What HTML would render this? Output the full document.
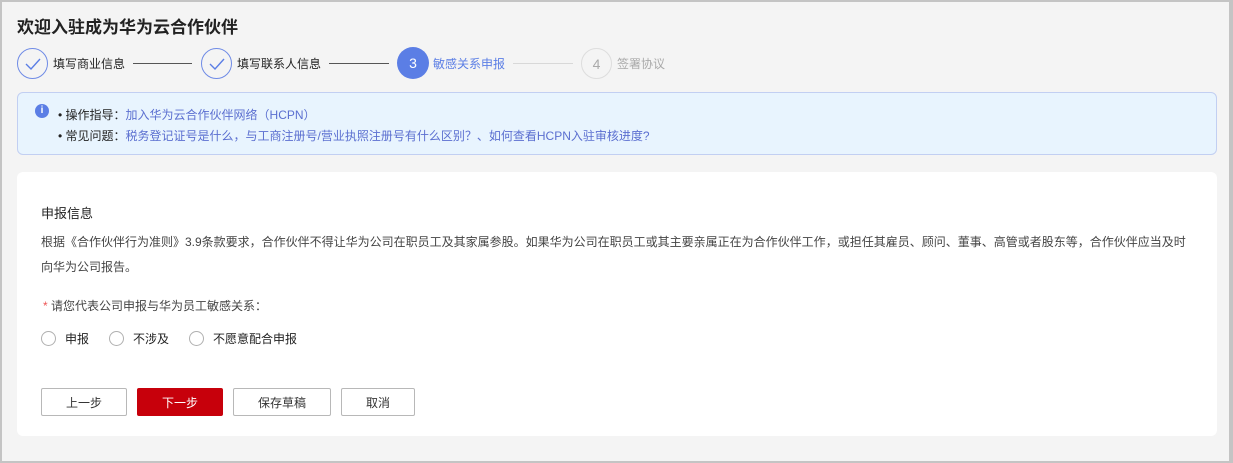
<!DOCTYPE html>
<html><head><meta charset="utf-8"><style>
*{margin:0;padding:0;box-sizing:border-box}
body{width:1233px;height:463px;overflow:hidden;font-family:"Liberation Sans","Noto Sans CJK SC",sans-serif;background:#c4c4c4;position:relative}
.page{position:absolute;left:2px;top:2px;width:1227px;height:459px;background:#f4f4f4}
.a{position:absolute;white-space:nowrap}
.c{position:absolute;width:31px;height:31px;border-radius:50%;display:flex;align-items:center;justify-content:center;font-size:14px}
.ln{position:absolute;height:1px;top:63px}
.btn{position:absolute;top:388px;height:28px;border:1px solid #b8b8b8;border-radius:2px;background:#fff;font-size:12px;color:#333;display:flex;align-items:center;justify-content:center}
.r{position:absolute;top:331px;width:15px;height:15px;border:1px solid #b0b0b0;border-radius:50%;background:#fff}
.st{position:absolute;white-space:nowrap;top:55px;font-size:12px}
</style></head><body>
<div class="page"></div>
<div class="a" style="left:17px;top:13px;font-size:17px;font-weight:bold;color:#222">欢迎入驻成为华为云合作伙伴</div>

<div class="c" style="left:17px;top:48px;border:1px solid #6f8be6"><svg width="16" height="12" viewBox="0 0 16 12"><path d="M1 6 L6 11 L15 1" fill="none" stroke="#5b7ee5" stroke-width="1.4"/></svg></div>
<div class="st" style="left:53px;color:#222">填写商业信息</div>
<div class="ln" style="left:133px;width:59px;background:#555"></div>
<div class="c" style="left:201px;top:48px;border:1px solid #6f8be6"><svg width="16" height="12" viewBox="0 0 16 12"><path d="M1 6 L6 11 L15 1" fill="none" stroke="#5b7ee5" stroke-width="1.4"/></svg></div>
<div class="st" style="left:237px;color:#222">填写联系人信息</div>
<div class="ln" style="left:329px;width:60px;background:#555"></div>
<div class="c" style="left:397px;top:47px;width:32px;height:32px;background:#5b7ee5;color:#fff">3</div>
<div class="st" style="left:433px;color:#5b7ee5">敏感关系申报</div>
<div class="ln" style="left:513px;width:60px;background:#d8d8d8"></div>
<div class="c" style="left:581px;top:48px;border:1px solid #ddd;color:#aaa">4</div>
<div class="st" style="left:617px;color:#aaa">签署协议</div>

<div class="a" style="left:17px;top:92px;width:1200px;height:63px;background:#e8f4fe;border:1px solid #c2cff2;border-radius:6px"></div>
<div class="a" style="left:35px;top:104px;width:14px;height:14px;border-radius:50%;background:#5b7ee5;color:#fff;font-size:10px;font-weight:bold;text-align:center;line-height:14px">i</div>
<div class="a" style="left:58px;top:106px;font-size:12px;color:#222">• 操作指导：<span style="color:#5b6fd0">加入华为云合作伙伴网络（HCPN）</span></div>
<div class="a" style="left:58px;top:127px;font-size:12px;color:#222">• 常见问题：<span style="color:#5b6fd0">税务登记证号是什么，与工商注册号/营业执照注册号有什么区别？、如何查看HCPN入驻审核进度?</span></div>

<div class="a" style="left:17px;top:172px;width:1200px;height:264px;background:#fff;border-radius:6px"></div>
<div class="a" style="left:41px;top:203px;font-size:13px;color:#222">申报信息</div>
<div class="a" style="left:41px;top:233px;font-size:12px;color:#444">根据《合作伙伴行为准则》3.9条款要求，合作伙伴不得让华为公司在职员工及其家属参股。如果华为公司在职员工或其主要亲属正在为合作伙伴工作，或担任其雇员、顾问、董事、高管或者股东等，合作伙伴应当及时</div>
<div class="a" style="left:41px;top:258px;font-size:12px;color:#444">向华为公司报告。</div>
<div class="a" style="left:43px;top:297px;font-size:12px;color:#444"><span style="color:#e55">*</span> 请您代表公司申报与华为员工敏感关系：</div>
<div class="r" style="left:41px"></div><div class="a" style="left:65px;top:330px;font-size:12px;color:#222">申报</div>
<div class="r" style="left:109px"></div><div class="a" style="left:133px;top:330px;font-size:12px;color:#222">不涉及</div>
<div class="r" style="left:189px"></div><div class="a" style="left:213px;top:330px;font-size:12px;color:#222">不愿意配合申报</div>

<div class="btn" style="left:41px;width:86px">上一步</div>
<div class="btn" style="left:137px;width:86px;background:#c7000b;border-color:#c7000b;color:#fff">下一步</div>
<div class="btn" style="left:233px;width:98px">保存草稿</div>
<div class="btn" style="left:341px;width:74px">取消</div>
</body></html>
